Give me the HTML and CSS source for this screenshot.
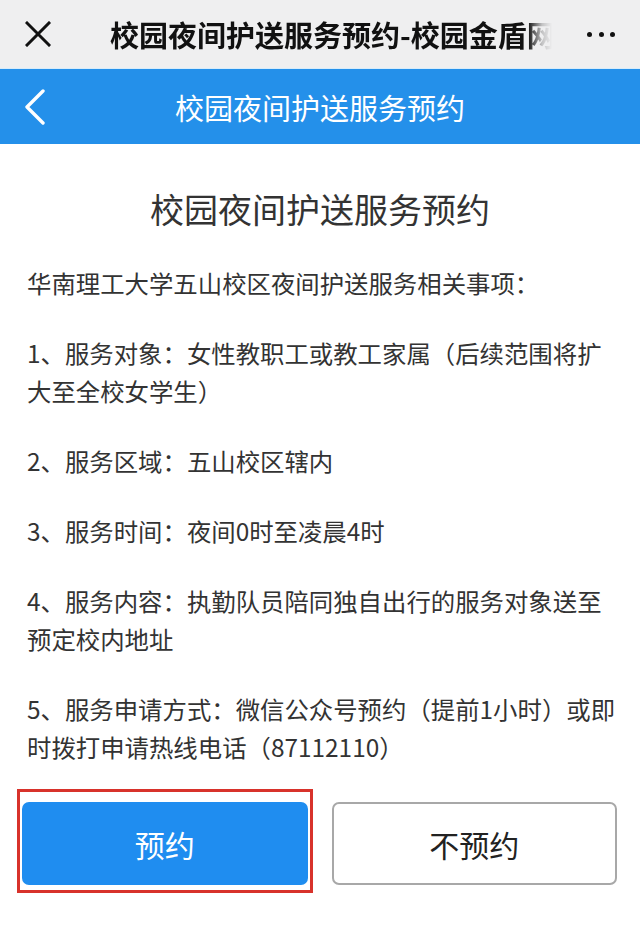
FILE: index.html
```html
<!DOCTYPE html>
<html lang="zh-CN">
<head>
<meta charset="utf-8">
<title>校园夜间护送服务预约</title>
<link rel="stylesheet" href="styles.css">
</head>
<body>
<div class="page">
  <header class="topbar">
    <svg class="close" width="26" height="26" viewBox="0 0 26 26" aria-hidden="true">
      <path d="M2 2 L24 24 M24 2 L2 24" stroke="#111" stroke-width="3" stroke-linecap="square" fill="none"/>
    </svg>
    <div class="top-title"><span>校园夜间护送服务预约-校园金盾网</span></div>
    <div class="more"><i></i><i></i><i></i></div>
  </header>
  <nav class="navbar">
    <div class="nav-side">
      <svg class="back" width="22" height="36" viewBox="0 0 22 36" aria-hidden="true">
        <path d="M19 2 L3 18 L19 34" stroke="#fff" stroke-width="3.4" stroke-linecap="round" stroke-linejoin="round" fill="none"/>
      </svg>
    </div>
    <div class="nav-title">校园夜间护送服务预约</div>
    <div class="nav-side"></div>
  </nav>
  <main class="content">
    <h1 class="title">校园夜间护送服务预约</h1>
    <p class="para">华南理工大学五山校区夜间护送服务相关事项：</p>
    <p class="para">1、服务对象：女性教职工或教工家属（后续范围将扩大至全校女学生）</p>
    <p class="para">2、服务区域：五山校区辖内</p>
    <p class="para">3、服务时间：夜间0时至凌晨4时</p>
    <p class="para">4、服务内容：执勤队员陪同独自出行的服务对象送至预定校内地址</p>
    <p class="para">5、服务申请方式：微信公众号预约（提前1小时）或即时拨打申请热线电话（87112110）</p>
  </main>
  <div class="actions">
    <div class="btn-wrap marked">
      <button class="btn btn-primary">预约</button>
    </div>
    <div class="btn-wrap">
      <button class="btn btn-default">不预约</button>
    </div>
  </div>
</div>
</body>
</html>
```

FILE: styles.css
```css
* {
  box-sizing: border-box;
}

html, body {
  margin: 0;
  padding: 0;
  background: #ffffff;
}

body {
  font-family: "Noto Sans CJK SC", "Noto Sans", "Liberation Sans", sans-serif;
  color: #333333;
}

.page {
  width: 640px;
  height: 933px;
  overflow: hidden;
}

/* top WeChat-like bar */
.topbar {
  height: 69px;
  background: #efeff0;
  display: flex;
  align-items: center;
  padding-left: 25px;
  border-bottom: 1px solid #d6ecfb;
}

.close {
  flex: none;
  display: block;
}

.top-title {
  margin-left: 59px;
  width: 450px;
  flex: none;
  overflow: hidden;
  white-space: nowrap;
  font-size: 29px;
  font-weight: 700;
  color: #111111;
  line-height: 40px;
  -webkit-mask-image: linear-gradient(to right, #000 0, #000 418px, rgba(0,0,0,0.2) 432px, transparent 442px);
  mask-image: linear-gradient(to right, #000 0, #000 418px, rgba(0,0,0,0.2) 432px, transparent 442px);
}

.more {
  margin-left: 27px;
  display: flex;
  gap: 6.5px;
  align-items: center;
}

.more i {
  display: block;
  width: 5px;
  height: 5px;
  border-radius: 50%;
  background: #111111;
}

/* blue nav bar */
.navbar {
  height: 75px;
  background: #2490ea;
  display: flex;
  align-items: center;
}

.nav-side {
  width: 80px;
  flex: none;
  padding-left: 24px;
  display: flex;
  align-items: center;
}

.back {
  display: block;
}

.nav-title {
  flex: 1;
  text-align: center;
  color: #ffffff;
  font-size: 29px;
  line-height: 40px;
}

/* content */
.content {
  padding: 0 21px 0 27px;
}

.title {
  margin: 42px 0 0;
  padding-right: 6px;
  text-align: center;
  font-size: 34px;
  font-weight: 400;
  line-height: 46px;
  color: #333333;
}

.para {
  margin: 0;
  font-size: 24.4px;
  line-height: 38px;
  color: #333333;
}

.title + .para {
  margin-top: 32px;
}

.para + .para {
  margin-top: 32px;
}

/* buttons */
.actions {
  display: flex;
  gap: 24px;
  padding: 0 23px 0 22px;
  margin-top: 36px;
}

.btn-wrap {
  flex: 1;
  position: relative;
}

.marked::after {
  content: "";
  position: absolute;
  left: -5px;
  right: -5px;
  top: -13px;
  bottom: -8px;
  border: 3px solid #d8322b;
  pointer-events: none;
}

.btn {
  display: block;
  width: 100%;
  height: 83px;
  border-radius: 7px;
  font-family: "Noto Sans CJK SC", "Noto Sans", sans-serif;
  font-size: 30px;
  cursor: pointer;
}

.btn-primary {
  background: #1f8df0;
  color: #ffffff;
  border: none;
}

.btn-default {
  background: #ffffff;
  color: #222222;
  border: 2px solid #a8a8a8;
}
```
